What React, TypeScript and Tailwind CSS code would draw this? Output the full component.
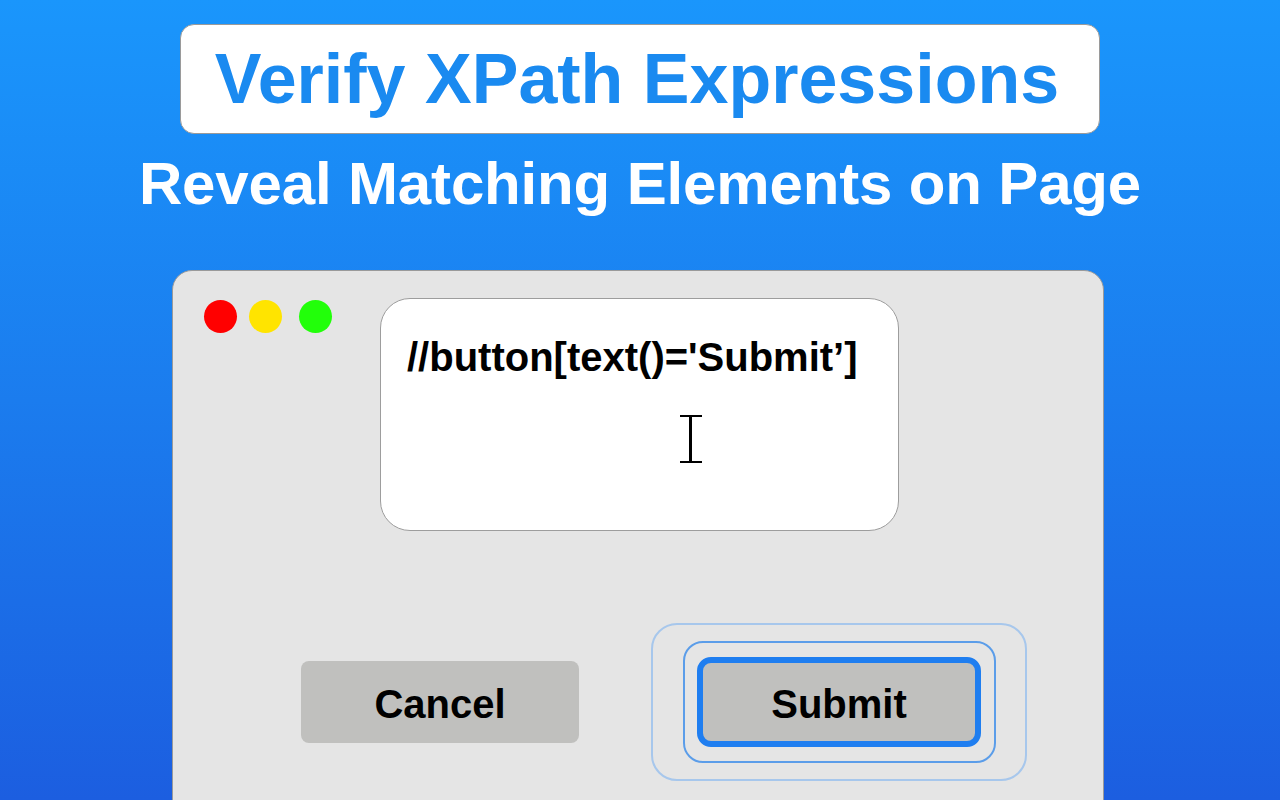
const font = { fontFamily: '"Liberation Sans", Arial, Helvetica, sans-serif' }

function TrafficLights() {
  return (
    <div className="flex items-center mt-[2px] shrink-0">
      <span className="block w-[33px] h-[33px] rounded-full bg-[#ff0000]" />
      <span className="block w-[33px] h-[33px] rounded-full bg-[#ffe400] ml-[12px]" />
      <span className="block w-[33px] h-[33px] rounded-full bg-[#22ff0a] ml-[17px]" />
    </div>
  )
}

function TextCursor() {
  return (
    <svg width="22" height="48" viewBox="0 0 22 48" className="block">
      <path d="M0 1H22M0 47H22" stroke="#000" strokeWidth="2" fill="none" />
      <path d="M10.5 1V47" stroke="#000" strokeWidth="3" fill="none" />
    </svg>
  )
}

export default function App() {
  return (
    <div
      className="w-[1280px] h-[800px] overflow-hidden flex flex-col items-center bg-gradient-to-b from-[#1a96fc] via-[#1b7cee] to-[#1c5ee0]"
      style={font}
    >
      <div className="shrink-0 mt-[24px] w-[920px] h-[110px] rounded-[14px] border border-[#9a9a9a] bg-white flex items-center justify-center">
        <h1 className="text-[70px] leading-none font-bold text-[#1a8af0] pr-[6px]">
          Verify XPath Expressions
        </h1>
      </div>

      <h2 className="shrink-0 mt-[20px] text-[60px] leading-none font-bold text-white tracking-[-0.15px]">
        Reveal Matching Elements on Page
      </h2>

      <div className="self-start shrink-0 ml-[172px] mt-[56px] w-[932px] h-[560px] rounded-t-[20px] border border-[#9a9a9a] bg-[#e5e5e5] pt-[27px]">
        <div className="flex items-start pl-[31px]">
          <TrafficLights />
          <div className="shrink-0 ml-[48px] w-[519px] h-[233px] rounded-[30px] border border-[#9d9d9d] bg-white pt-[38px] pl-[26px]">
            <p className="text-[40px] leading-none font-bold text-black">
              //button[text()='Submit’]
            </p>
            <div className="mt-[38px] ml-[273px]">
              <TextCursor />
            </div>
          </div>
        </div>

        <div className="flex items-center pl-[128px] mt-[92px]">
          <button className="shrink-0 w-[278px] h-[82px] rounded-[8px] bg-[#c0c0be] flex items-center justify-center pt-[4px] text-[40px] leading-none font-bold text-black">
            Cancel
          </button>
          <div className="shrink-0 ml-[72px] w-[376px] h-[158px] rounded-[26px] border-2 border-[#a7c7ec] flex items-center justify-center">
            <div className="w-[313px] h-[122px] rounded-[20px] border-2 border-[#5b9de9] flex items-center justify-center">
              <button className="w-[284px] h-[90px] rounded-[14px] border-[6px] border-[#1f7ef0] bg-[#c0c0be] flex items-center justify-center pt-[4px] text-[40px] leading-none font-bold text-black">
                Submit
              </button>
            </div>
          </div>
        </div>
      </div>
    </div>
  )
}
